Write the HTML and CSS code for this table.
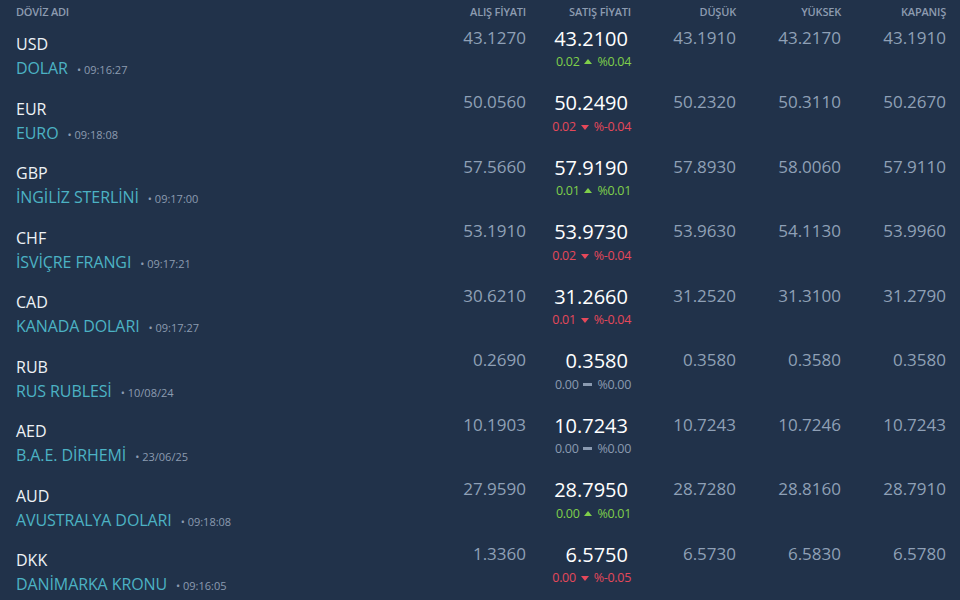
FILE: index.html
```html
<!DOCTYPE html>
<html lang="tr">
<head>
<meta charset="utf-8">
<title>Döviz</title>
<link rel="stylesheet" href="styles.css">
</head>
<body>
<div class="table">
  <div class="head">
    <div class="h-name">DÖVİZ ADI</div>
    <div class="h-col">ALIŞ FİYATI</div>
    <div class="h-col">SATIŞ FİYATI</div>
    <div class="h-col">DÜŞÜK</div>
    <div class="h-col">YÜKSEK</div>
    <div class="h-col">KAPANIŞ</div>
  </div>

  <div class="row">
    <div class="name"><div class="code">USD</div><div class="full">DOLAR<span class="time">• 09:16:27</span></div></div>
    <div class="val">43.1270</div>
    <div class="sell"><div class="big">43.2100</div><div class="chg up">0.02 <i class="tri"></i> %0.04</div></div>
    <div class="val">43.1910</div>
    <div class="val">43.2170</div>
    <div class="val">43.1910</div>
  </div>

  <div class="row">
    <div class="name"><div class="code">EUR</div><div class="full">EURO<span class="time">• 09:18:08</span></div></div>
    <div class="val">50.0560</div>
    <div class="sell"><div class="big">50.2490</div><div class="chg down">0.02 <i class="tri"></i> %-0.04</div></div>
    <div class="val">50.2320</div>
    <div class="val">50.3110</div>
    <div class="val">50.2670</div>
  </div>

  <div class="row">
    <div class="name"><div class="code">GBP</div><div class="full">İNGİLİZ STERLİNİ<span class="time">• 09:17:00</span></div></div>
    <div class="val">57.5660</div>
    <div class="sell"><div class="big">57.9190</div><div class="chg up">0.01 <i class="tri"></i> %0.01</div></div>
    <div class="val">57.8930</div>
    <div class="val">58.0060</div>
    <div class="val">57.9110</div>
  </div>

  <div class="row">
    <div class="name"><div class="code">CHF</div><div class="full">İSVİÇRE FRANGI<span class="time">• 09:17:21</span></div></div>
    <div class="val">53.1910</div>
    <div class="sell"><div class="big">53.9730</div><div class="chg down">0.02 <i class="tri"></i> %-0.04</div></div>
    <div class="val">53.9630</div>
    <div class="val">54.1130</div>
    <div class="val">53.9960</div>
  </div>

  <div class="row">
    <div class="name"><div class="code">CAD</div><div class="full">KANADA DOLARI<span class="time">• 09:17:27</span></div></div>
    <div class="val">30.6210</div>
    <div class="sell"><div class="big">31.2660</div><div class="chg down">0.01 <i class="tri"></i> %-0.04</div></div>
    <div class="val">31.2520</div>
    <div class="val">31.3100</div>
    <div class="val">31.2790</div>
  </div>

  <div class="row">
    <div class="name"><div class="code">RUB</div><div class="full">RUS RUBLESİ<span class="time">• 10/08/24</span></div></div>
    <div class="val">0.2690</div>
    <div class="sell"><div class="big">0.3580</div><div class="chg flat">0.00 <i class="tri"></i> %0.00</div></div>
    <div class="val">0.3580</div>
    <div class="val">0.3580</div>
    <div class="val">0.3580</div>
  </div>

  <div class="row">
    <div class="name"><div class="code">AED</div><div class="full">B.A.E. DİRHEMİ<span class="time">• 23/06/25</span></div></div>
    <div class="val">10.1903</div>
    <div class="sell"><div class="big">10.7243</div><div class="chg flat">0.00 <i class="tri"></i> %0.00</div></div>
    <div class="val">10.7243</div>
    <div class="val">10.7246</div>
    <div class="val">10.7243</div>
  </div>

  <div class="row">
    <div class="name"><div class="code">AUD</div><div class="full">AVUSTRALYA DOLARI<span class="time">• 09:18:08</span></div></div>
    <div class="val">27.9590</div>
    <div class="sell"><div class="big">28.7950</div><div class="chg up">0.00 <i class="tri"></i> %0.01</div></div>
    <div class="val">28.7280</div>
    <div class="val">28.8160</div>
    <div class="val">28.7910</div>
  </div>

  <div class="row">
    <div class="name"><div class="code">DKK</div><div class="full">DANİMARKA KRONU<span class="time">• 09:16:05</span></div></div>
    <div class="val">1.3360</div>
    <div class="sell"><div class="big">6.5750</div><div class="chg down">0.00 <i class="tri"></i> %-0.05</div></div>
    <div class="val">6.5730</div>
    <div class="val">6.5830</div>
    <div class="val">6.5780</div>
  </div>
</div>
</body>
</html>
```
FILE: styles.css
```css
html, body {
  margin: 0;
  padding: 0;
  background: #21324a;
  height: 100%;
  overflow: hidden;
}
body {
  font-family: "Open Sans", "DejaVu Sans", sans-serif;
  color: #8fa0b6;
}
.table {
  width: 960px;
}
.head, .row {
  display: grid;
  grid-template-columns: 1fr 105px 105px 105px 105px 105px;
  padding: 0 14px 0 16px;
}
.head {
  height: 22px;
  align-items: center;
  font-size: 11px;
  font-weight: 600;
  color: #8d9bb0;
  letter-spacing: -0.2px;
}
.h-col {
  text-align: right;
}
.row {
  height: 64.5px;
}
.name {
  padding-top: 10px;
}
.code {
  font-size: 16px;
  line-height: 24px;
  color: #eef2f6;
}
.full {
  font-size: 16px;
  line-height: 24px;
  color: #4cb2c4;
  letter-spacing: -0.1px;
}
.time {
  font-size: 11px;
  color: #8c9bb0;
  margin-left: 9px;
  letter-spacing: 0;
}
.val {
  text-align: right;
  font-size: 17px;
  line-height: 22px;
  padding-top: 4.5px;
  color: #8fa0b6;
}
.sell {
  text-align: right;
  padding-top: 2.5px;
}
.big {
  font-size: 20px;
  line-height: 27px;
  color: #ffffff;
  padding-right: 3px;
}
.chg {
  font-size: 12.5px;
  line-height: 17px;
  margin-top: 1.5px;
  letter-spacing: -0.3px;
}
.tri {
  display: inline-block;
  width: 0;
  height: 0;
  margin: 0 2px;
  vertical-align: middle;
  border-left: 4.5px solid transparent;
  border-right: 4.5px solid transparent;
}
.up { color: #7fcf4a; }
.up .tri {
  border-bottom: 5px solid #7fcf4a;
  position: relative;
  top: -1px;
}
.down { color: #e5485a; }
.down .tri {
  border-top: 5px solid #e5485a;
}
.flat { color: #8a9ab0; }
.flat .tri {
  border: 0;
  width: 9px;
  height: 3px;
  background: #8a9ab0;
  position: relative;
  top: -1px;
}
```
